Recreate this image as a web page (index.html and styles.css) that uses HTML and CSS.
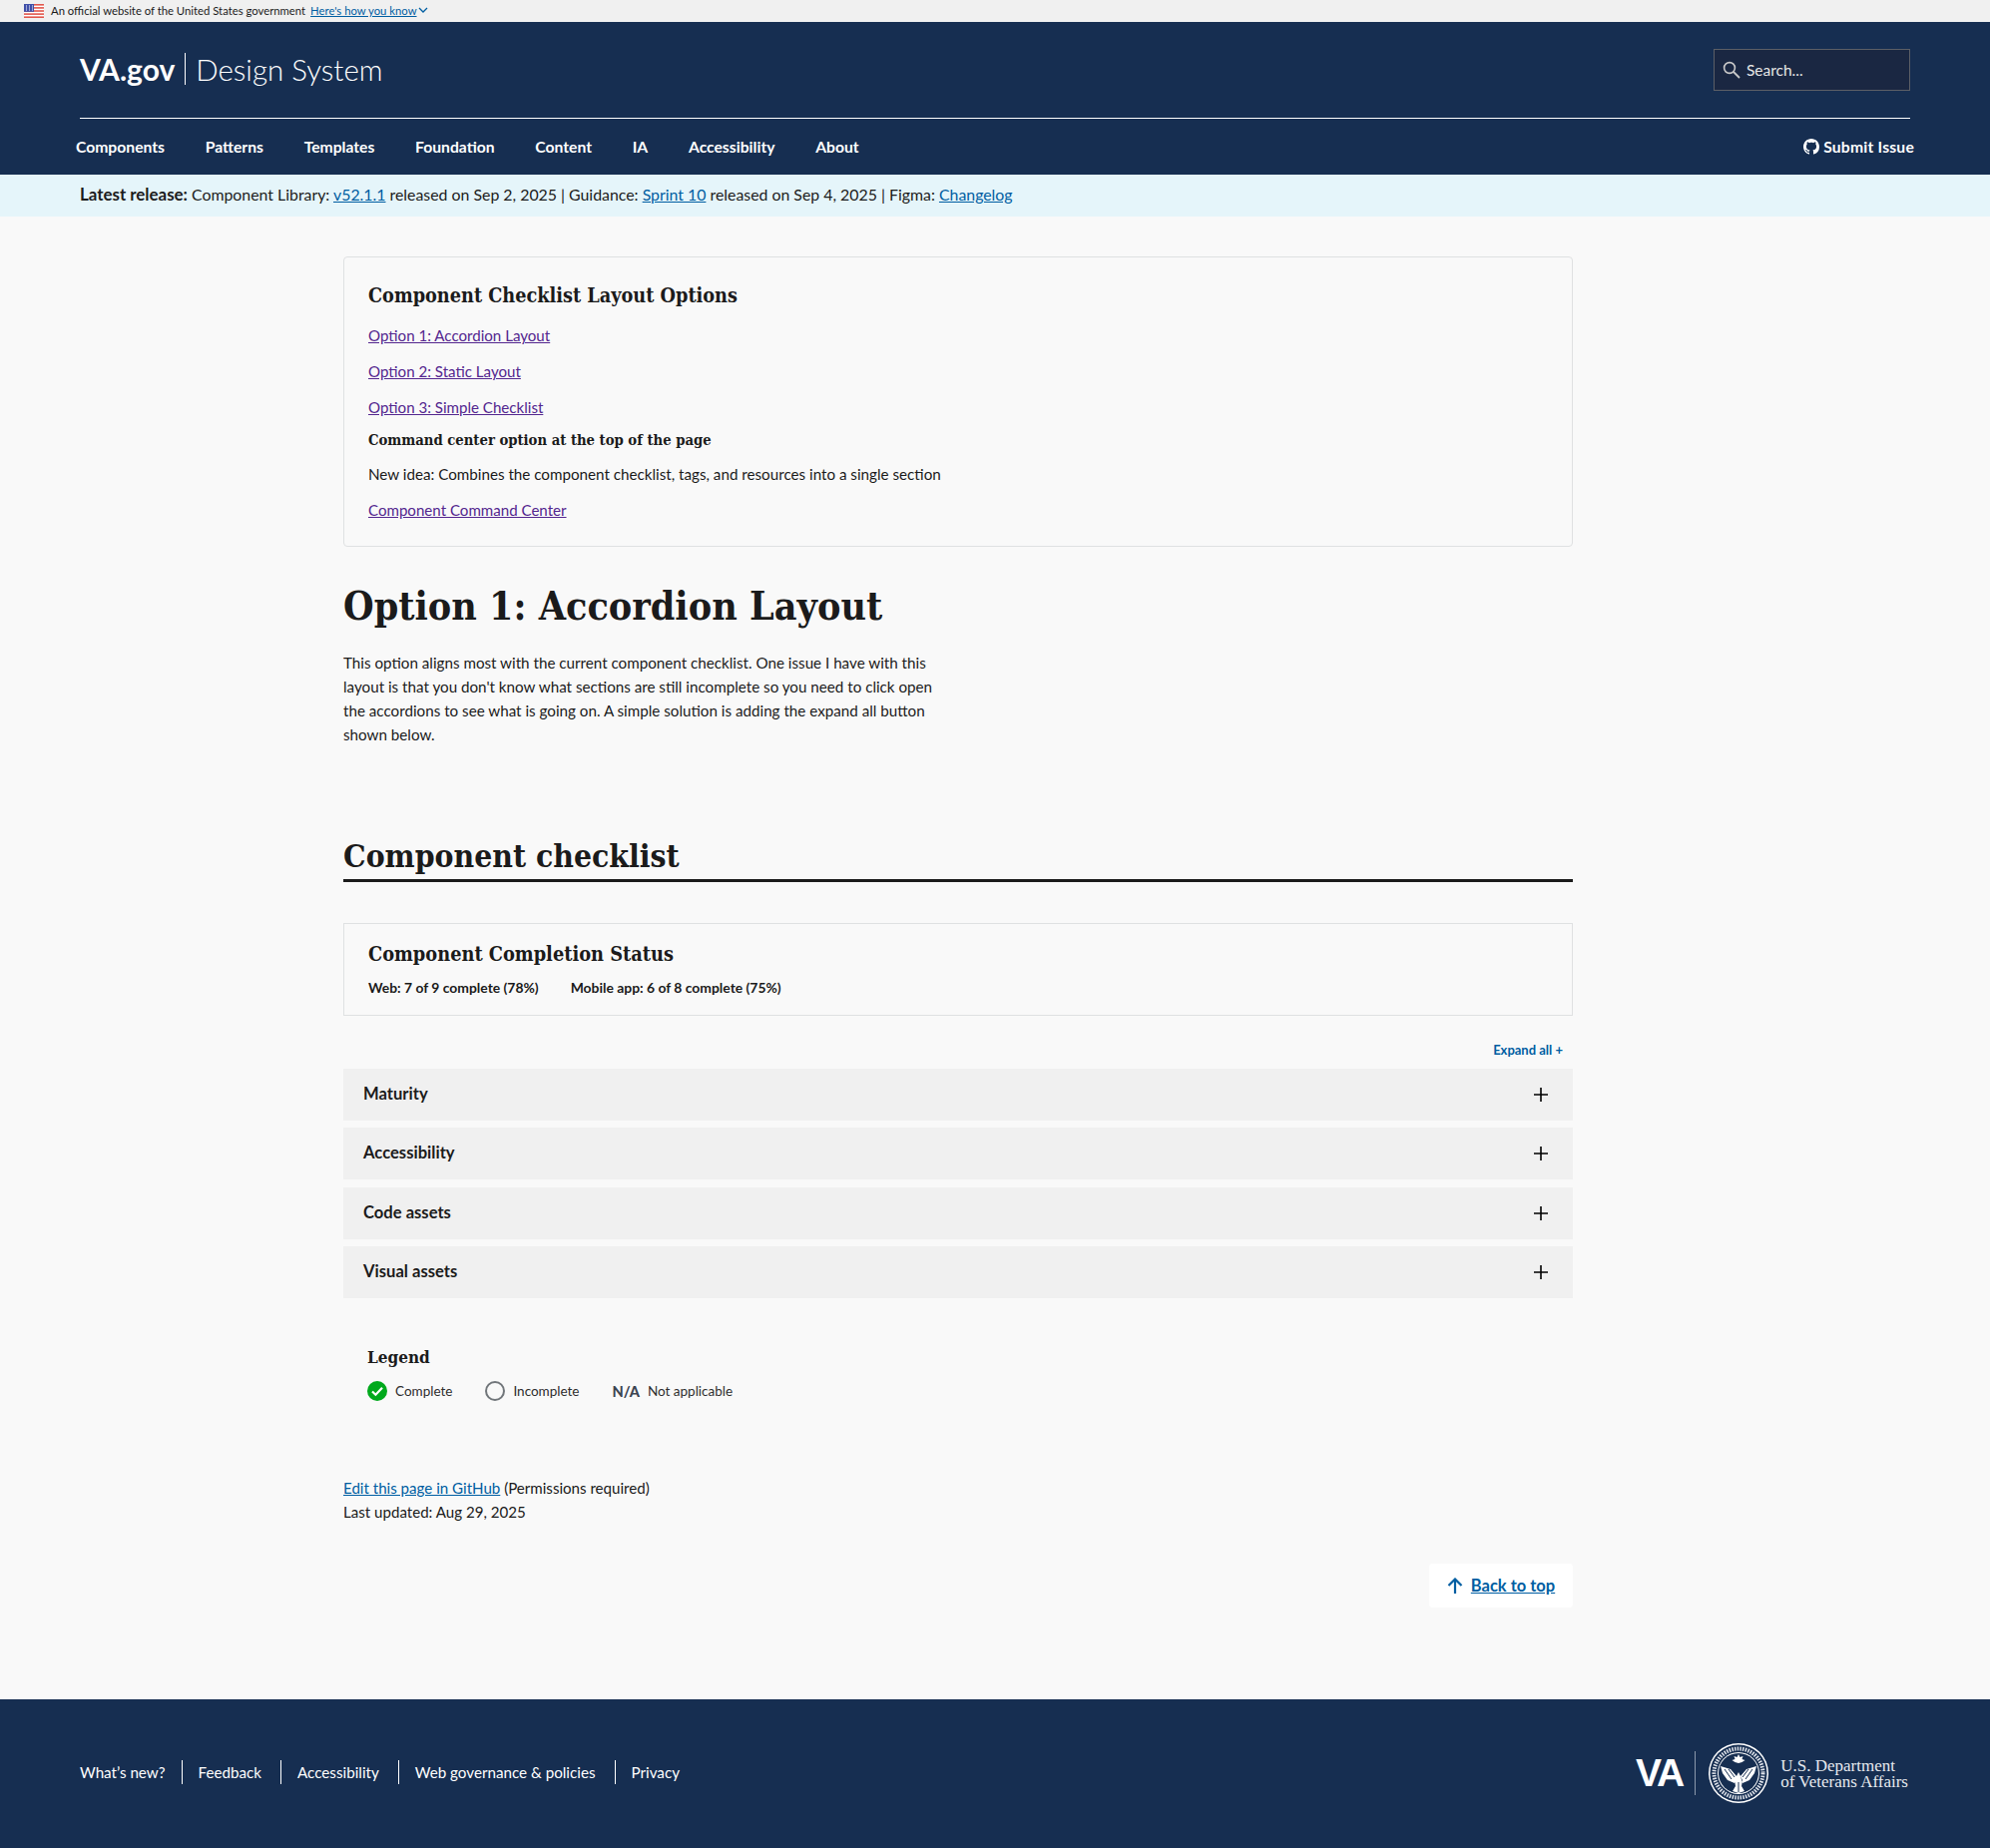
FILE: index.html
```html
<!DOCTYPE html>
<html lang="en">
<head>
    <meta charset="UTF-8">
    <title>Option 1: Accordion Layout - VA.gov Design System</title>
    <link rel="stylesheet" href="styles.css">
</head>
<body>
<!-- government banner -->
<div class="gov-banner">
    <svg class="flag" width="20" height="14" viewBox="0 0 20 14">
        <rect width="20" height="14" fill="#fff"/>
        <rect y="0" width="20" height="1.6" fill="#e2574c"/>
        <rect y="3.1" width="20" height="1.6" fill="#e2574c"/>
        <rect y="6.2" width="20" height="1.6" fill="#e2574c"/>
        <rect y="9.3" width="20" height="1.6" fill="#e2574c"/>
        <rect y="12.4" width="20" height="1.6" fill="#e2574c"/>
        <rect width="10" height="7.8" fill="#3f4fa8"/>
        <path d="M2 2h1M5 2h1M8 2h1M2 4h1M5 4h1M8 4h1M2 6h1M5 6h1M8 6h1" stroke="#fff" stroke-width="1"/>
    </svg>
    <span>An official website of the United States government</span>
    <a href="#">Here's how you know</a>
    <svg class="chevron" width="10" height="7" viewBox="0 0 10 7"><path d="M1 1l4 4 4-4" fill="none" stroke="#005ea2" stroke-width="1.3"/></svg>
</div>

<header class="site-header">
    <div class="brand-row">
        <div class="brand"><b>VA.gov</b><i class="brand-bar"></i><span>Design System</span></div>
        <div class="search">
            <svg width="18" height="18" viewBox="0 0 18 18"><circle cx="7" cy="7" r="5.4" fill="none" stroke="#c9c9c9" stroke-width="1.6"/><path d="M11 11l6 6" stroke="#c9c9c9" stroke-width="1.8"/></svg>
            <span>Search...</span>
        </div>
    </div>
    <nav class="main-nav">
        <a href="#">Components</a>
        <a href="#">Patterns</a>
        <a href="#">Templates</a>
        <a href="#">Foundation</a>
        <a href="#">Content</a>
        <a href="#">IA</a>
        <a href="#">Accessibility</a>
        <a href="#">About</a>
        <a href="#" class="submit-issue">
            <svg width="16" height="16" viewBox="0 0 16 16"><path fill="#fff" d="M8 0C3.58 0 0 3.58 0 8c0 3.54 2.29 6.53 5.47 7.59.4.07.55-.17.55-.38 0-.19-.01-.82-.01-1.49-2.01.37-2.53-.49-2.69-.94-.09-.23-.48-.94-.82-1.13-.28-.15-.68-.52-.01-.53.63-.01 1.08.58 1.23.82.72 1.21 1.87.87 2.33.66.07-.52.28-.87.51-1.07-1.78-.2-3.64-.89-3.64-3.95 0-.87.31-1.59.82-2.15-.08-.2-.36-1.02.08-2.12 0 0 .67-.21 2.2.82.64-.18 1.32-.27 2-.27s1.36.09 2 .27c1.53-1.04 2.2-.82 2.2-.82.44 1.1.16 1.92.08 2.12.51.56.82 1.27.82 2.15 0 3.07-1.87 3.75-3.65 3.95.29.25.54.73.54 1.48 0 1.07-.01 1.93-.01 2.2 0 .21.15.46.55.38A8.01 8.01 0 0016 8c0-4.42-3.58-8-8-8z"/></svg>
            Submit Issue
        </a>
    </nav>
</header>

<div class="release-bar">
    <b>Latest release:</b> Component Library: <a href="#">v52.1.1</a> released on Sep 2, 2025 | Guidance: <a href="#">Sprint 10</a> released on Sep 4, 2025 | Figma: <a href="#">Changelog</a>
</div>

<main class="content">
    <section class="options-card">
        <h2>Component Checklist Layout Options</h2>
        <p><a href="#" class="visited">Option 1: Accordion Layout</a></p>
        <p><a href="#" class="visited">Option 2: Static Layout</a></p>
        <p><a href="#" class="visited">Option 3: Simple Checklist</a></p>
        <p class="options-bold">Command center option at the top of the page</p>
        <p class="options-note">New idea: Combines the component checklist, tags, and resources into a single section</p>
        <p><a href="#" class="visited">Component Command Center</a></p>
    </section>

    <h1>Option 1: Accordion Layout</h1>
    <p class="intro">This option aligns most with the current component checklist. One issue I have with this layout is that you don't know what sections are still incomplete so you need to click open the accordions to see what is going on. A simple solution is adding the expand all button shown below.</p>

    <h2 class="section-title">Component checklist</h2>

    <section class="status-card">
        <h3>Component Completion Status</h3>
        <div class="status-row">
            <span>Web: 7 of 9 complete (78%)</span>
            <span>Mobile app: 6 of 8 complete (75%)</span>
        </div>
    </section>

    <div class="expand-row"><a href="#">Expand all +</a></div>

    <div class="accordion">
        <div class="acc-item"><span>Maturity</span><svg width="14" height="14" viewBox="0 0 14 14"><path d="M7 0v14M0 7h14" stroke="#000" stroke-width="1.6"/></svg></div>
        <div class="acc-item"><span>Accessibility</span><svg width="14" height="14" viewBox="0 0 14 14"><path d="M7 0v14M0 7h14" stroke="#000" stroke-width="1.6"/></svg></div>
        <div class="acc-item"><span>Code assets</span><svg width="14" height="14" viewBox="0 0 14 14"><path d="M7 0v14M0 7h14" stroke="#000" stroke-width="1.6"/></svg></div>
        <div class="acc-item"><span>Visual assets</span><svg width="14" height="14" viewBox="0 0 14 14"><path d="M7 0v14M0 7h14" stroke="#000" stroke-width="1.6"/></svg></div>
    </div>

    <section class="legend">
        <h4>Legend</h4>
        <div class="legend-row">
            <span class="legend-item">
                <svg width="20" height="20" viewBox="0 0 20 20"><circle cx="10" cy="10" r="10" fill="#00a91c"/><path d="M5 10.500l3.400 3.200L15 6.800" fill="none" stroke="#fff" stroke-width="2.200"/></svg>
                Complete
            </span>
            <span class="legend-item">
                <svg width="20" height="20" viewBox="0 0 20 20"><circle cx="10" cy="10" r="9" fill="none" stroke="#71767a" stroke-width="2"/></svg>
                Incomplete
            </span>
            <span class="legend-item"><b class="na">N/A</b>Not applicable</span>
        </div>
    </section>

    <p class="page-meta"><a href="#">Edit this page in GitHub</a> (Permissions required)<br>Last updated: Aug 29, 2025</p>

    <div class="back-row">
        <a href="#" class="back-top">
            <svg width="16" height="16" viewBox="0 0 16 16"><path d="M8 16V2M1.500 8L8 1.500 14.500 8" fill="none" stroke="#005ea2" stroke-width="2.200"/></svg>
            <span>Back to top</span>
        </a>
    </div>
</main>

<footer class="site-footer">
    <nav class="footer-links">
        <a href="#">What’s new?</a>
        <a href="#">Feedback</a>
        <a href="#">Accessibility</a>
        <a href="#">Web governance &amp; policies</a>
        <a href="#">Privacy</a>
    </nav>
    <div class="va-logo">
        <b class="va-mark">VA</b>
        <i class="va-bar"></i>
        <svg class="seal" width="62" height="62" viewBox="0 0 62 62">
            <circle cx="31" cy="31" r="30" fill="#fff"/>
            <circle cx="31" cy="31" r="28.500" fill="#162e51"/>
            <circle cx="31" cy="31" r="24.500" fill="none" stroke="#dfe3ea" stroke-width="4" stroke-dasharray="1.500 1.200"/>
            <circle cx="31" cy="31" r="21" fill="#fff"/>
            <circle cx="31" cy="31" r="20" fill="#162e51"/>
            <!-- eagle -->
            <path fill="#fff" d="M31 12l1.500 3 3-1-1 3 3 1-3 2-3.500 1-3.500-1-3-2 3-1-1-3 3 1zM13 24l10 3 6 7-2 7-7-3-5-7zM49 24l-10 3-6 7 2 7 7-3 5-7zM31 30l4 8-1 6 3 5-6 2-6-2 3-5-1-6z"/>
            <path fill="none" stroke="#162e51" stroke-width="1" d="M17 27l7 10M21 27l6 8M45 27l-7 10M41 27l-6 8M31 40v10"/>
        </svg>
        <span class="va-name">U.S. Department<br>of Veterans Affairs</span>
    </div>
</footer>
</body>
</html>
```

FILE: styles.css
```css
* {
    box-sizing: border-box;
}
body {
    margin: 0;
    background: #f9f9f9;
    color: #1b1b1b;
    font-family: "Lato", "Open Sans", sans-serif;
    font-size: 15.1px;
    min-height: 1852px;
    display: flex;
    flex-direction: column;
}
a {
    color: #005ea2;
}
a.visited {
    color: #54278f;
}

/* gov banner */
.gov-banner {
    height: 22px;
    background: #f0f0f0;
    padding: 0 0 1px 24px;
    display: flex;
    align-items: center;
    font-size: 11.3px;
}
.gov-banner .flag {
    margin-right: 7px;
}
.gov-banner a {
    margin-left: 5px;
}
.gov-banner .chevron {
    margin-left: 1px;
}

/* header */
.site-header {
    background: #162e51;
    height: 153px;
    padding: 0 80px;
    color: #fff;
}
.brand-row {
    height: 97px;
    border-bottom: 1px solid #fff;
    display: flex;
    justify-content: space-between;
    align-items: center;
    padding-bottom: 2px;
}
.brand {
    display: flex;
    align-items: center;
    font-size: 30px;
}
.brand b {
    font-weight: 700;
}
.brand span {
    font-weight: 300;
    font-size: 29.5px;
}
.brand-bar {
    width: 1px;
    height: 32px;
    background: #fff;
    margin: 0 10px;
}
.search {
    width: 197px;
    height: 42px;
    background: #1a2742;
    border: 1px solid #5c5f66;
    display: flex;
    align-items: center;
    gap: 6px;
    padding-left: 8px;
    font-size: 15.5px;
    color: #e6e6e6;
    margin-top: 1px;
}
.main-nav {
    display: flex;
    align-items: center;
    height: 56px;
    margin: 0 -4px;
    gap: 40.7px;
    font-weight: 700;
    font-size: 15.7px;
}
.main-nav a {
    color: #fff;
    text-decoration: none;
}
.main-nav .submit-issue {
    margin-left: auto;
    display: flex;
    align-items: center;
    gap: 4px;
    letter-spacing: 0.2px;
}

/* release bar */
.release-bar {
    background: #e5f5fa;
    height: 42px;
    padding: 0 80px;
    line-height: 39px;
    font-size: 15.86px;
}
.release-bar b {
    font-size: 16.9px;
}

/* main column */
.content {
    width: 1232px;
    margin: 40px 0 0 344px;
    flex: 1;
}
.options-card {
    height: 291px;
    border: 1px solid #dfe1e2;
    border-radius: 4px;
    padding: 26px 24px;
}
.options-card h2,
.status-card h3,
.legend h4,
h1,
.section-title {
    font-family: "DejaVu Serif Condensed", "DejaVu Serif", serif;
    font-weight: 700;
    margin: 0;
}
.options-card h2 {
    font-size: 19.7px;
    line-height: 26px;
    margin-bottom: 14px;
}
.options-card p {
    margin: 0 0 12px;
    line-height: 24px;
    font-size: 15.1px;
}
.options-card p.options-bold {
    font-family: "DejaVu Serif Condensed", "DejaVu Serif", serif;
    font-weight: 700;
    font-size: 14.7px;
    margin: -3px 0 10px;
}
.options-card p.options-note {
    font-size: 15.2px;
}
h1 {
    font-size: 39.1px;
    line-height: 52px;
    margin-top: 33px;
}
.intro {
    width: 610px;
    margin: 19px 0 0;
    line-height: 24px;
    font-size: 15.2px;
}
.section-title {
    font-size: 31.6px;
    line-height: 39px;
    margin-top: 90px;
    padding-bottom: 4px;
    border-bottom: 3px solid #1b1b1b;
}
.status-card {
    height: 93px;
    margin-top: 41px;
    border: 1px solid #dfe1e2;
    padding: 17px 24px;
}
.status-card h3 {
    font-size: 19.8px;
    line-height: 26px;
}
.status-row {
    display: flex;
    gap: 32px;
    font-size: 13.9px;
    font-weight: 700;
    margin-top: 12px;
}
.expand-row {
    display: flex;
    justify-content: flex-end;
    padding: 0 10px;
    margin-top: 26px;
    height: 27px;
    font-size: 13px;
    font-weight: 700;
}
.expand-row a {
    text-decoration: none;
}
.accordion {
    display: flex;
    flex-direction: column;
    gap: 7.3px;
}
.acc-item {
    height: 52px;
    background: #f0f0f0;
    display: flex;
    justify-content: space-between;
    align-items: center;
    padding: 0 25px 0 20px;
    font-weight: 700;
    font-size: 16.6px;
}
.acc-item span {
    margin-bottom: 2px;
}
.legend {
    margin-top: 47px;
    padding-left: 24px;
}
.legend h4 {
    font-size: 17px;
    line-height: 24px;
}
.legend-row {
    display: flex;
    gap: 33px;
    margin-top: 12px;
    font-size: 13.5px;
    color: #2e2e2e;
}
.legend-item {
    display: flex;
    align-items: center;
    gap: 8px;
}
.legend-item .na {
    font-size: 14.5px;
    font-weight: 900;
    color: #3d4551;
    margin-top: 2px;
}
.page-meta {
    margin: 75px 0 0;
    line-height: 24px;
}
.back-row {
    display: flex;
    justify-content: flex-end;
    margin-top: 40px;
}
.back-top {
    width: 144px;
    height: 44px;
    background: #fff;
    border-radius: 4px;
    display: flex;
    align-items: center;
    justify-content: center;
    gap: 8px;
    font-weight: 700;
    font-size: 16.5px;
}

/* footer */
.site-footer {
    height: 149px;
    background: #162e51;
    color: #fff;
    padding: 0 80px 4px;
    display: flex;
    align-items: center;
    justify-content: space-between;
}
.footer-links {
    display: flex;
    font-size: 15.2px;
}
.footer-links a {
    color: #fff;
    text-decoration: none;
    line-height: 24px;
    padding: 0 19px 0 16px;
    border-right: 1px solid #fff;
}
.footer-links a:first-child {
    padding: 0 16px 0 0;
}
.footer-links a:last-child {
    border-right: 0;
}
.va-logo {
    display: flex;
    align-items: center;
    margin: 3px 2px 0 0;
}
.va-mark {
    font-family: "Liberation Sans", sans-serif;
    font-size: 39px;
    letter-spacing: -2px;
}
.va-bar {
    width: 1px;
    height: 44px;
    background: #8b98ab;
    margin: 0 12px;
}
.va-name {
    font-family: "Liberation Serif", serif;
    font-size: 17px;
    line-height: 16px;
    margin: 2px 0 0 11px;
    color: #e6e9ee;
}
```
